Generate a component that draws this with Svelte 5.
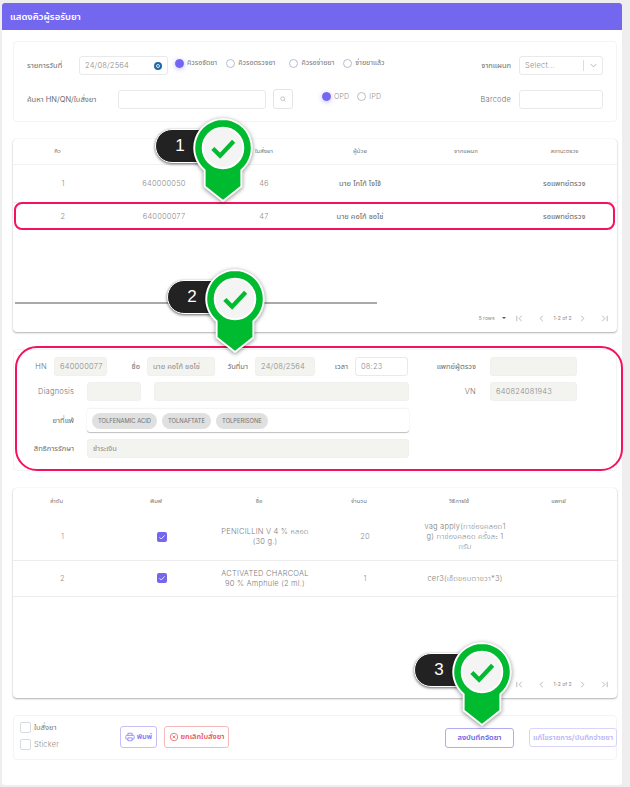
<script>
  const queue = [
    { no: 1, hn: '640000050', rx: 46, name: 'นาย โกโก้ โจโจ้', status: 'รอแพทย์ตรวจ' },
    { no: 2, hn: '640000077', rx: 47, name: 'นาย คอโก้ ชอโช่', status: 'รอแพทย์ตรวจ' }
  ];
  const queueCols = ['คิว', 'HN', 'ใบสั่งยา', 'ผู้ป่วย', 'จากแผนก', 'สถานะตรวจ'];
  const drugCols = ['ลำดับ', 'พิมพ์', 'ชื่อ', 'จำนวน', 'วิธีการใช้', 'แพทย์'];
  const drugs = [
    { no: 1, name: 'PENICILLIN V 4 % หลอด (30 g.)', qty: 20, use: 'vag apply(ทาช่องคลอด1 g) ทาช่องคลอด ครั้งละ 1 กรัม' },
    { no: 2, name: 'ACTIVATED CHARCOAL 90 % Amphule (2 ml.)', qty: 1, use: 'cer3(เช็ดขอบตาขวา*3)' }
  ];
  const allergies = ['TOLFENAMIC ACID', 'TOLNAFTATE', 'TOLPERISONE'];
  const markers = [
    { n: 1, cls: 'm1' },
    { n: 2, cls: 'm2' },
    { n: 3, cls: 'm3' }
  ];
</script>

{#snippet pager()}
  <div class="pager">
    <span>5 rows</span>
    <i class="caret"></i>
    <svg class="pg first" viewBox="0 0 10 10"><path d="M2 2v6M7.5 2 4.5 5l3 3" /></svg>
    <svg class="pg prev" viewBox="0 0 10 10"><path d="M6.5 2 3.5 5l3 3" /></svg>
    <span>1-2 of 2</span>
    <svg class="pg next" viewBox="0 0 10 10"><path d="M3.5 2l3 3-3 3" /></svg>
    <svg class="pg last" viewBox="0 0 10 10"><path d="M2.5 2l3 3-3 3M8 2v6" /></svg>
  </div>
{/snippet}

<div class="page">
  <div class="card">
    <div class="title">แสดงคิวผู้รอรับยา</div>

    <section class="box search">
      <div class="search-row">
        <span class="lb lb-date">รายการวันที่</span>
        <div class="inp date latin">24/08/2564<i class="cal"></i></div>
        <div class="radios first-radios">
          <span class="radio on"></span><span class="rt r1">คิวรอจัดยา</span>
          <span class="radio"></span><span class="rt r2">คิวรอตรวจยา</span>
          <span class="radio"></span><span class="rt r3">คิวรอจ่ายยา</span>
          <span class="radio"></span><span class="rt">จ่ายยาแล้ว</span>
        </div>
        <span class="lb right-lb">จากแผนก</span>
        <div class="inp select latin">
          <span>Select...</span>
          <span class="sel-end">
            <svg viewBox="0 0 10 10"><path d="M2 3.5 5 6.5l3-3" /></svg>
          </span>
        </div>
      </div>
      <div class="search-row second">
        <span class="lb lb-find">ค้นหา HN/QN/ใบสั่งยา</span>
        <div class="inp find"></div>
        <button class="find-btn">
          <svg viewBox="0 0 10 10"><circle cx="4.6" cy="4.6" r="2.4" /><path d="M6.4 6.4 8 8" /></svg>
        </button>
        <div class="radios second-radios">
          <span class="radio on"></span><span class="rt latin r4">OPD</span>
          <span class="radio"></span><span class="rt latin">IPD</span>
        </div>
        <span class="lb right-lb latin">Barcode</span>
        <div class="inp barcode"></div>
      </div>
    </section>

    <section class="tbl queue">
      <div class="row head">
        {#each queueCols as col}
          <div>{col}</div>
        {/each}
      </div>
      {#each queue as q}
        <div class="row body">
          <div class="latin idx">{q.no}</div>
          <div class="latin">{q.hn}</div>
          <div class="latin">{q.rx}</div>
          <div class="dark">{q.name}</div>
          <div></div>
          <div class="dark status">{q.status}</div>
        </div>
      {/each}
      <div class="grow"></div>
      <div class="scrollbar"></div>
      {@render pager()}
    </section>

    <section class="box detail">
      <div class="d-left">
        <div class="d-row">
          <span class="lb latin l-hn">HN</span>
          <div class="inp ro w-hn latin">640000077</div>
          <span class="lb l-name">ชื่อ</span>
          <div class="inp ro w-name">นาย คอโก้ ชอโช่</div>
          <span class="lb l-date">วันที่มา</span>
          <div class="inp ro w-date latin">24/08/2564</div>
          <span class="lb l-time">เวลา</span>
          <div class="inp w-time latin">08:23</div>
        </div>
        <div class="d-row">
          <span class="lb latin l-side">Diagnosis</span>
          <div class="inp ro w-diag"></div>
          <div class="inp ro w-diag2"></div>
        </div>
        <div class="d-row">
          <span class="lb l-side">ยาที่แพ้</span>
          <div class="chips">
            {#each allergies as a}
              <span class="chip">{a}</span>
            {/each}
          </div>
        </div>
        <div class="d-row">
          <span class="lb l-side">สิทธิการรักษา</span>
          <div class="inp ro w-right">ชำระเงิน</div>
        </div>
      </div>
      <div class="d-right">
        <div class="d-row">
          <span class="lb l-doc">แพทย์ผู้ตรวจ</span>
          <div class="inp ro w-doc"></div>
        </div>
        <div class="d-row">
          <span class="lb latin l-doc">VN</span>
          <div class="inp ro w-doc latin">640824081943</div>
        </div>
      </div>
    </section>

    <section class="tbl drugs">
      <div class="row head">
        {#each drugCols as col}
          <div>{col}</div>
        {/each}
      </div>
      {#each drugs as d}
        <div class="row body">
          <div class="latin">{d.no}</div>
          <div>
            <span class="tick">
              <svg viewBox="0 0 10 10"><path d="M2.4 5.2 4.2 7l3.4-3.6" /></svg>
            </span>
          </div>
          <div class="wrap">{d.name}</div>
          <div class="latin">{d.qty}</div>
          <div class="wrap">{d.use}</div>
          <div></div>
        </div>
      {/each}
      <div class="grow"></div>
      {@render pager()}
    </section>

    <section class="box actions">
      <div class="checks">
        <label><span class="cb"></span>ใบสั่งยา</label>
        <label><span class="cb"></span><span class="latin">Sticker</span></label>
      </div>
      <button class="btn print">
        <svg viewBox="0 0 12 12"><path d="M3.5 4V1.5h5V4M3.5 8.5H2A1 1 0 0 1 1 7.5V5a1 1 0 0 1 1-1h8a1 1 0 0 1 1 1v2.500a1 1 0 0 1-1 1H8.500M3.500 7h5v3.500h-5z" /></svg>
        พิมพ์
      </button>
      <button class="btn cancel">
        <svg viewBox="0 0 12 12"><circle cx="6" cy="6" r="4.500" /><path d="M4.300 4.300l3.400 3.400M7.700 4.300l-3.400 3.400" /></svg>
        ยกเลิกใบสั่งยา
      </button>
      <button class="btn save">ลงบันทึกจัดยา</button>
      <button class="btn edit">แก้ไขรายการ/บันทึกจ่ายยา</button>
    </section>
  </div>

  <!-- annotations drawn over the screenshot -->
  <div class="hl hl-row"></div>
  <div class="hl hl-detail"></div>
  {#each markers as m}
    <div class="marker {m.cls}">
      <div class="pill">{m.n}</div>
      <svg class="pin" viewBox="0 0 64 90">
        <path d="M32 2a30 30 0 0 1 19 53v17L32 87 13 72V55A30 30 0 0 1 32 2z" fill="#00bb2f" stroke="#fff" stroke-width="2" />
        <circle cx="32" cy="32" r="21" fill="#f4f4f4" stroke="#fff" stroke-width="2" />
        <path d="M21.500 32.500 29 40l14-15" fill="none" stroke="#00bb2f" stroke-width="4.500" />
      </svg>
    </div>
  {/each}
</div>

<style>
  :global(body) {
    margin: 0;
    background: #eeeeee;
  }

  .page {
    position: relative;
    width: 630px;
    height: 787px;
    overflow: hidden;
    font-family: Inter, "Noto Sans", "Noto Sans Thai", "DejaVu Sans", sans-serif;
    font-size: 7.500px;
    color: #777;
  }

  .card {
    margin: 3px 8px 0 2px;
    height: 782px;
    background: #fff;
    border-radius: 3px;
    padding: 0 5px 0 11px;
    box-sizing: border-box;
    display: flex;
    flex-direction: column;
  }

  .title {
    margin: 0 -5px 0 -11px;
    height: 27px;
    padding-left: 8px;
    display: flex;
    align-items: center;
    background: #7367f0;
    color: #fff;
    font-size: 9.500px;
    font-weight: 600;
    border-radius: 3px 3px 0 0;
  }

  .box {
    border: 1px solid #f4f4f4;
    border-radius: 4px;
    box-sizing: border-box;
  }

  .latin {
    font-weight: 300;
    letter-spacing: 0.2px;
    color: #8f8f8f;
  }

  .lb {
    flex: none;
    color: #6e6e6e;
  }

  .inp {
    flex: none;
    box-sizing: border-box;
    height: 19px;
    padding: 0 5px;
    display: flex;
    align-items: center;
    background: #fff;
    border: 1px solid #e9e9ec;
    border-radius: 3px;
    color: #8c8c8c;
  }

  .ro {
    background: #f3f3f0;
    border-color: #f0f0ee;
  }

  /* search box */
  .search {
    margin-top: 11px;
    height: 81px;
    padding: 14px 13px 0 13px;
  }

  .search-row {
    display: flex;
    align-items: center;
  }

  .second {
    margin-top: 14px;
  }

  .lb-date {
    width: 52px;
  }

  .date {
    width: 89px;
    justify-content: space-between;
  }

  .cal {
    width: 8px;
    height: 8px;
    border-radius: 50%;
    background: #1f6aa5;
    border: 2px solid #1f6aa5;
    box-sizing: border-box;
    box-shadow: inset 0 0 0 1px #fff;
  }

  .radios {
    display: flex;
    align-items: center;
    margin-top: -5px;
  }

  .first-radios {
    margin-left: 7px;
  }

  .second-radios {
    margin-left: 29px;
    margin-top: -6px;
  }

  .radio {
    flex: none;
    width: 9px;
    height: 9px;
    box-sizing: border-box;
    border: 1px solid #b6bec9;
    border-radius: 50%;
    margin-right: 3px;
  }

  .radio.on {
    background: #7367f0;
    border-color: #7367f0;
    box-shadow: 0 1px 5px rgba(115, 103, 240, 0.45);
  }

  .rt {
    font-size: 7px;
    margin-right: 6px;
  }

  .r1 {
    margin-right: 9px;
  }

  .r2 {
    margin-right: 14px;
  }

  .r3 {
    margin-right: 9px;
  }

  .r4 {
    margin-right: 8px;
  }

  .right-lb {
    width: 83px;
    text-align: right;
    margin-right: 8px;
    margin-left: auto;
  }

  .select {
    width: 84px;
    justify-content: space-between;
    padding-right: 0;
  }

  .sel-end {
    display: flex;
    align-items: center;
    justify-content: center;
    width: 18px;
    height: 11px;
    border-left: 1px solid #ddd;
  }

  .sel-end svg {
    width: 9px;
    height: 9px;
    fill: none;
    stroke: #aaa;
  }

  .barcode {
    width: 84px;
  }

  .lb-find {
    width: 91px;
  }

  .find {
    width: 148px;
  }

  .find-btn {
    flex: none;
    margin-left: 7px;
    width: 20px;
    height: 20px;
    padding: 0;
    display: flex;
    align-items: center;
    justify-content: center;
    background: #fff;
    border: 1px solid #e4e4e4;
    border-radius: 3px;
  }

  .find-btn svg {
    width: 8px;
    height: 8px;
    fill: none;
    stroke: #aaa;
    stroke-width: 0.8;
  }

  /* tables */
  .tbl {
    display: flex;
    flex-direction: column;
    border-radius: 4px;
    background: #fff;
    box-shadow: 0 1px 2px rgba(0, 0, 0, 0.3), 0 0 1px rgba(0, 0, 0, 0.12);
  }

  .row {
    display: grid;
    align-items: center;
    text-align: center;
    border-bottom: 1px solid #ececec;
    box-sizing: border-box;
  }

  .queue {
    margin-top: 17px;
    height: 193px;
  }

  .queue .row {
    grid-template-columns: 89px 124px 76px 116px 96px 101px;
  }

  .queue .head {
    height: 26px;
    font-size: 6px;
    border-bottom-color: #f2f2f2;
  }

  .queue .body {
    height: 38px;
  }

  .queue .body + .body {
    height: 26px;
    margin-bottom: 9px;
    border-bottom: 0;
  }

  .idx {
    padding-left: 11px;
  }

  .dark {
    color: #666;
  }

  .status {
    text-align: left;
    padding-left: 29px;
  }

  .grow {
    flex: 1;
  }

  .scrollbar {
    width: 362px;
    height: 2px;
    margin-left: 2px;
    background: #a9a9a9;
  }

  .pager {
    flex: none;
    height: 28px;
    display: flex;
    align-items: center;
    justify-content: flex-end;
    padding-right: 8px;
    font-size: 5px;
    color: #888;
  }

  .caret {
    width: 0;
    height: 0;
    margin: 0 9px 0 7.500px;
    border: 2.500px solid transparent;
    border-top-color: #555;
    border-bottom: 0;
  }

  .pg {
    width: 9px;
    height: 9px;
    fill: none;
    stroke: #aaa;
    stroke-width: 0.9;
  }

  .first {
    margin-right: 13px;
  }

  .prev {
    margin-right: 7.500px;
  }

  .next {
    margin: 0 13px 0 6.500px;
  }

  /* detail */
  .detail {
    margin-top: 17px;
    height: 122px;
    display: flex;
    padding-top: 7px;
  }

  .d-left {
    width: 396px;
    flex: none;
  }

  .d-row {
    display: flex;
    align-items: center;
    margin-bottom: 6px;
  }

  .d-left .d-row:nth-child(n + 2) {
    margin-bottom: 7px;
  }

  .d-row > .lb {
    text-align: right;
    margin-right: 7px;
  }

  .l-hn { width: 33px; }
  .w-hn { width: 53px; }
  .l-name { width: 33px; }
  .w-name { width: 68px; }
  .l-date { width: 33px; }
  .w-date { width: 60px; }
  .l-time { width: 33px; margin-right: 7px; }
  .w-time { width: 53px; }

  .d-row > .l-side {
    width: 60px;
    margin-right: 13px;
  }

  .w-diag { width: 54px; margin-right: 13px; }
  .w-diag2 { width: 255px; }
  .w-right { width: 322px; }

  .chips {
    width: 322px;
    height: 24px;
    box-sizing: border-box;
    padding: 0 5px;
    display: flex;
    align-items: center;
    gap: 5px;
    border-radius: 3px;
    border-top: 1px solid #f4f4f4;
    box-shadow: 0 1px 1px rgba(0, 0, 0, 0.25), 0 0 1px rgba(0, 0, 0, 0.08);
  }

  .chip {
    height: 16px;
    padding: 0 6px;
    display: flex;
    align-items: center;
    border-radius: 8px;
    background: #e0e0e0;
    font-size: 5.800px;
    color: #707070;
  }

  .d-right {
    padding-left: 22px;
  }

  .d-row > .l-doc {
    width: 44px;
    margin-right: 14px;
    white-space: nowrap;
  }

  .w-doc { width: 87px; }

  /* drug table */
  .drugs {
    margin-top: 17px;
    height: 210px;
  }

  .drugs .row {
    grid-template-columns: 99px 100px 106px 94px 106px 93px;
  }

  .drugs .head {
    height: 26px;
    font-size: 6px;
    border-bottom: 0;
  }

  .drugs .head > div {
    padding-right: 12px;
  }

  .drugs .body {
    height: 47px;
    line-height: 10px;
  }

  .drugs .body + .body {
    height: 36px;
  }

  .wrap {
    padding: 0 9px;
    font-weight: 300;
    letter-spacing: 0.2px;
    color: #7c7c7c;
  }

  .tick {
    display: inline-flex;
    width: 10px;
    height: 10px;
    background: #7367f0;
    border-radius: 2px;
    vertical-align: middle;
  }

  .tick svg {
    fill: none;
    stroke: #fff;
    stroke-width: 0.8;
  }

  /* actions */
  .actions {
    margin-top: 17px;
    height: 45px;
    display: flex;
    align-items: center;
    padding-left: 6px;
  }

  .checks {
    width: 100px;
    margin-top: -3px;
    display: flex;
    flex-direction: column;
    gap: 6px;
  }

  .checks label {
    display: flex;
    align-items: center;
    gap: 3px;
    height: 11px;
  }

  .cb {
    width: 11px;
    height: 11px;
    box-sizing: border-box;
    border: 1.500px solid #d5dbe1;
    border-radius: 2px;
  }

  .btn {
    display: flex;
    align-items: center;
    justify-content: center;
    gap: 2px;
    padding: 0;
    height: 22px;
    box-sizing: border-box;
    background: #fff;
    border: 1px solid #c5c0fa;
    border-radius: 3px;
    color: #7f75f1;
    font: inherit;
    font-weight: 600;
  }

  .print {
    width: 37px;
    margin: -2px 7px 0 0;
  }

  .print svg,
  .cancel svg {
    width: 10px;
    height: 10px;
    fill: none;
    stroke: currentColor;
    stroke-width: 0.9;
  }

  .cancel {
    width: 65px;
    margin-top: -2px;
    color: #ea5455;
    border-color: #f6b9b9;
  }

  .save {
    width: 69px;
    height: 20px;
    margin-left: auto;
    color: #6a60e4;
    border-color: #b1abf6;
  }

  .edit {
    width: 88px;
    height: 19px;
    margin: 0 -1px 0 15px;
    color: #b9b4f7;
    border-color: #d8d5fb;
  }

  /* annotation overlays */
  .hl {
    position: absolute;
    box-sizing: border-box;
    border: 2px solid #f5115e;
    pointer-events: none;
  }

  .hl-row {
    left: 14px;
    top: 202px;
    width: 601px;
    height: 28px;
    border-radius: 8px;
  }

  .hl-detail {
    left: 15px;
    top: 346px;
    width: 608px;
    height: 125px;
    border-radius: 22px;
  }

  .marker {
    position: absolute;
    width: 110px;
    height: 90px;
  }

  .m1 { left: 155px; top: 115px; }
  .m2 { left: 167px; top: 266px; }
  .m3 { left: 414px; top: 639px; }

  .pill {
    position: absolute;
    left: 0;
    top: 14px;
    width: 60px;
    height: 34px;
    padding-right: 10px;
    box-sizing: border-box;
    display: flex;
    align-items: center;
    justify-content: center;
    background: #222;
    border: 1px solid #fff;
    border-radius: 17px;
    color: #fff;
    font-family: "Liberation Sans", sans-serif;
    font-size: 17px;
    box-shadow: 0 1px 3px rgba(0, 0, 0, 0.6);
  }

  .pin {
    position: absolute;
    left: 37px;
    top: 2px;
    width: 62px;
    height: 87px;
    filter: drop-shadow(0 1px 2px rgba(0, 0, 0, 0.45));
  }
</style>
